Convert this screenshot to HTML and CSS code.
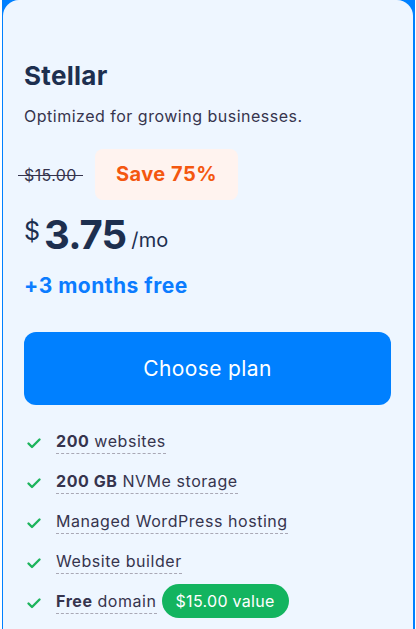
FILE: index.html
```html
<!DOCTYPE html>
<html>
<head>
<meta charset="utf-8">
<link rel="stylesheet" href="styles.css">
</head>
<body>
<div class="frame">
  <div class="card">
    <h2 class="title">Stellar</h2>
    <p class="subtitle">Optimized for growing businesses.</p>
    <div class="discount">
      <span class="old-price">$15.00</span>
      <span class="save">Save 75%</span>
    </div>
    <div class="price">
      <span class="currency">$</span>
      <span class="amount">3.75</span>
      <span class="period">/mo</span>
    </div>
    <div class="bonus">+3 months free</div>
    <button class="cta">Choose plan</button>
    <ul class="features">
      <li><svg class="check" viewBox="0 0 16 16"><path d="M2.5 8.5l3.5 3.5 7.5-7.5" fill="none" stroke="#1db45d" stroke-width="2.4" stroke-linecap="round" stroke-linejoin="round"/></svg><span class="feat"><b>200</b> websites</span></li>
      <li><svg class="check" viewBox="0 0 16 16"><path d="M2.5 8.5l3.5 3.5 7.5-7.5" fill="none" stroke="#1db45d" stroke-width="2.4" stroke-linecap="round" stroke-linejoin="round"/></svg><span class="feat"><b>200 GB</b> NVMe storage</span></li>
      <li><svg class="check" viewBox="0 0 16 16"><path d="M2.5 8.5l3.5 3.5 7.5-7.5" fill="none" stroke="#1db45d" stroke-width="2.4" stroke-linecap="round" stroke-linejoin="round"/></svg><span class="feat">Managed WordPress hosting</span></li>
      <li><svg class="check" viewBox="0 0 16 16"><path d="M2.5 8.5l3.5 3.5 7.5-7.5" fill="none" stroke="#1db45d" stroke-width="2.4" stroke-linecap="round" stroke-linejoin="round"/></svg><span class="feat">Website builder</span></li>
      <li><svg class="check" viewBox="0 0 16 16"><path d="M2.5 8.5l3.5 3.5 7.5-7.5" fill="none" stroke="#1db45d" stroke-width="2.4" stroke-linecap="round" stroke-linejoin="round"/></svg><span class="feat"><b>Free</b> domain</span><span class="pill">$15.00 value</span></li>
    </ul>
  </div>
</div>
</body>
</html>
```

FILE: styles.css
```css
html, body {
  margin: 0;
  padding: 0;
  background: #ffffff;
}
body {
  font-family: "Inter", "Noto Sans", sans-serif;
  color: #36344d;
}
.frame {
  margin-left: 2px;
  width: 410px;
  height: 629px;
  background: #0080ff;
  padding: 0 2px 0 1px;
  overflow: hidden;
}
.card {
  background: #eef6ff;
  border-radius: 16px 16px 0 0;
  height: 100%;
  padding: 60px 22px 0 21px;
  box-sizing: border-box;
}
.title {
  margin: 0;
  font-size: 26px;
  line-height: 32px;
  font-weight: 700;
  color: #1d2f4f;
  letter-spacing: 0.3px;
}
.subtitle {
  margin: 12px 0 0;
  font-size: 16px;
  line-height: 24px;
  color: #36344d;
  letter-spacing: 0.5px;
}
.discount {
  display: flex;
  align-items: center;
  gap: 12px;
  margin-top: 21px;
  margin-left: -6px;
}
.old-price {
  position: relative;
  padding: 0 6px;
  font-size: 16px;
  color: #36344d;
  letter-spacing: 0.4px;
}
.old-price::after {
  content: "";
  position: absolute;
  left: 0;
  right: 0;
  top: 52%;
  height: 1.5px;
  background: #36344d;
}
.save {
  background: #fff3ef;
  color: #f4570f;
  font-weight: 700;
  font-size: 20px;
  line-height: 24px;
  letter-spacing: 0.5px;
  padding: 13px 21px 14px;
  border-radius: 8px;
}
.price {
  display: flex;
  align-items: flex-start;
  margin-top: 11px;
  color: #1d2f4f;
}
.currency {
  font-size: 25px;
  line-height: 28px;
  margin-top: 6px;
  margin-right: 4px;
}
.amount {
  font-size: 40px;
  font-weight: 700;
  line-height: 48px;
  letter-spacing: -0.9px;
}
.period {
  font-size: 20px;
  line-height: 28px;
  margin-top: 15px;
  margin-left: 5px;
  letter-spacing: 0.2px;
}
.bonus {
  margin-top: 13px;
  font-size: 21px;
  font-weight: 700;
  line-height: 28px;
  letter-spacing: 0.5px;
  color: #0b7cff;
}
.cta {
  display: block;
  width: 100%;
  margin-top: 32px;
  height: 73px;
  border: none;
  border-radius: 12px;
  background: #0080ff;
  color: #ffffff;
  font-family: inherit;
  font-size: 21px;
  letter-spacing: 0.4px;
}
.features {
  list-style: none;
  margin: 22px 0 0;
  padding: 0;
  display: flex;
  flex-direction: column;
  gap: 12px;
}
.features li {
  display: flex;
  align-items: center;
  height: 28px;
}
.check {
  width: 16px;
  height: 16px;
  margin: 4px 14px 0 2px;
  flex-shrink: 0;
}
.feat {
  font-size: 16px;
  line-height: 24px;
  border-bottom: 1px dashed #a9a8b5;
  letter-spacing: 0.55px;
}
.feat b {
  font-weight: 700;
}
.pill {
  margin-left: 5px;
  background: #13b45f;
  color: #ffffff;
  font-size: 16px;
  line-height: 24px;
  letter-spacing: 0.3px;
  padding: 5px 14px;
  border-radius: 18px;
}
```
